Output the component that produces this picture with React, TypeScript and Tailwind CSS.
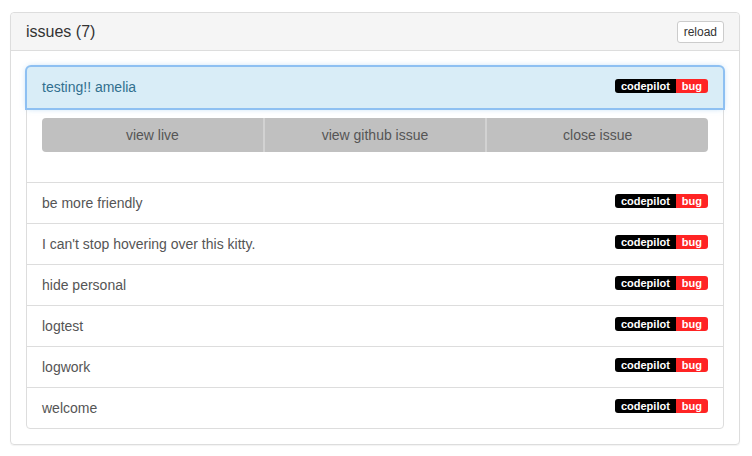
const issues = [
  "be more friendly",
  "I can't stop hovering over this kitty.",
  "hide personal",
  "logtest",
  "logwork",
  "welcome",
];

const Labels = () => (
  <div className="-mt-[4px] flex items-center text-[11px] font-bold leading-[14px] text-white">
    <span className="rounded-l-[3px] bg-black px-[6px]">codepilot</span>
    <span className="rounded-r-[3px] bg-[#ff2424] px-[6px]">bug</span>
  </div>
);

const App = () => {
  return (
    <div className="h-[456px] w-[752px] bg-white pl-[10px] pt-[12px] font-['Liberation_Sans',Arial,sans-serif] text-[14px] text-[#555]">
      <div className="w-[730px] rounded-[4px] border border-[#ddd] shadow-[0_1px_1px_rgba(0,0,0,0.05)]">
        {/* heading */}
        <div className="flex h-[38px] items-center justify-between rounded-t-[4px] border-b border-[#ddd] bg-[#f5f5f5] px-[15px]">
          <h3 className="text-[16px] text-[#333]">issues (7)</h3>
          <button className="h-[22px] rounded-[3px] border border-[#ccc] bg-white px-[6px] text-[12px] leading-[18px] text-[#333]">
            reload
          </button>
        </div>

        {/* body */}
        <div className="p-[15px]">
          <div className="rounded-[4px] border border-[#ddd]">
            {/* active item */}
            <div className="relative flex h-[41px] items-center justify-between rounded-t-[4px] bg-[#d9edf7] px-[15px] text-[#31708f] shadow-[0_0_0_2px_#8ec0f2,0_0_6px_rgba(102,175,233,0.6)]">
              <span>testing!! amelia</span>
              <Labels />
            </div>
            <div className="border-b border-[#ddd] px-[15px] pb-[30px] pt-[10px]">
              <div className="flex h-[34px] overflow-hidden rounded-[4px] bg-[#c0c0c0] text-[#555]">
                <div className="flex flex-1 items-center justify-center">view live</div>
                <div className="w-[2px] bg-[#d2d2d2]" />
                <div className="flex flex-1 items-center justify-center">view github issue</div>
                <div className="w-[2px] bg-[#d2d2d2]" />
                <div className="flex flex-1 items-center justify-center">close issue</div>
              </div>
            </div>
            {issues.map((title, i) => (
              <div
                key={title}
                className={
                  i < issues.length - 1
                    ? "flex h-[41px] items-center justify-between border-b border-[#ddd] px-[15px]"
                    : "flex h-[40px] items-center justify-between px-[15px]"
                }
              >
                <span>{title}</span>
                <Labels />
              </div>
            ))}
          </div>
        </div>
      </div>
    </div>
  );
};

export default App;
